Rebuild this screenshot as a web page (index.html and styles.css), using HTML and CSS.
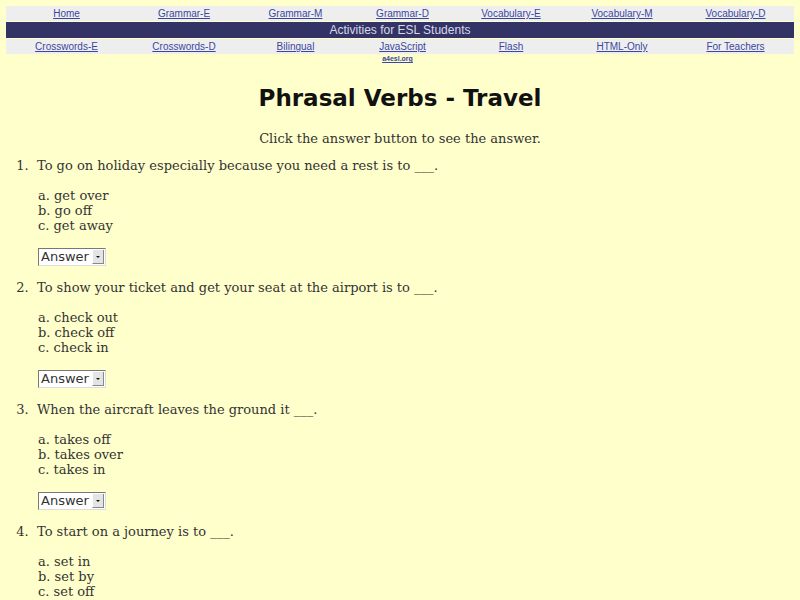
FILE: index.html
```html
<!DOCTYPE html>
<html>
<head>
<meta charset="utf-8">
<title>Phrasal Verbs - Travel</title>
<link rel="stylesheet" href="styles.css">
</head>
<body>
<div class="page">
  <nav class="nav">
    <div class="nav-row">
      <a href="#">Home</a>
      <a href="#">Grammar-E</a>
      <a href="#">Grammar-M</a>
      <a href="#">Grammar-D</a>
      <a href="#">Vocabulary-E</a>
      <a href="#">Vocabulary-M</a>
      <a href="#">Vocabulary-D</a>
    </div>
    <div class="nav-title">Activities for ESL Students</div>
    <div class="nav-row">
      <a href="#">Crosswords-E</a>
      <a href="#">Crosswords-D</a>
      <a href="#">Bilingual</a>
      <a href="#">JavaScript</a>
      <a href="#">Flash</a>
      <a href="#">HTML-Only</a>
      <a href="#">For Teachers</a>
    </div>
    <div class="site"><a href="#">a4esl.org</a></div>
  </nav>

  <h1 class="title">Phrasal Verbs - Travel</h1>
  <p class="intro">Click the answer button to see the answer.</p>

  <ol class="quiz">
    <li>
      <div class="q">To go on holiday especially because you need a rest is to ___.</div>
      <div class="opts">a. get over<br>b. go off<br>c. get away</div>
      <div class="sel"><span class="sel-text">Answer</span><span class="sel-btn"><span class="tri"></span></span></div>
    </li>
    <li>
      <div class="q">To show your ticket and get your seat at the airport is to ___.</div>
      <div class="opts">a. check out<br>b. check off<br>c. check in</div>
      <div class="sel"><span class="sel-text">Answer</span><span class="sel-btn"><span class="tri"></span></span></div>
    </li>
    <li>
      <div class="q">When the aircraft leaves the ground it ___.</div>
      <div class="opts">a. takes off<br>b. takes over<br>c. takes in</div>
      <div class="sel"><span class="sel-text">Answer</span><span class="sel-btn"><span class="tri"></span></span></div>
    </li>
    <li>
      <div class="q">To start on a journey is to ___.</div>
      <div class="opts">a. set in<br>b. set by<br>c. set off</div>
      <div class="sel"><span class="sel-text">Answer</span><span class="sel-btn"><span class="tri"></span></span></div>
    </li>
  </ol>
</div>
</body>
</html>
```

FILE: styles.css
```css
html, body {
  margin: 0;
  padding: 0;
  background: #ffffcc;
}
.page {
  padding: 6px 6px 0 6px;
  font-family: "DejaVu Serif", serif;
  color: #333;
}
.nav {
  display: flex;
  flex-direction: column;
  font-family: "Liberation Sans", Arial, sans-serif;
}
.nav-row {
  display: grid;
  grid-template-columns: 121px 114px 109px 105px 112px 110px 117px;
  background: #eeeeee;
  height: 15px;
  align-items: center;
  font-size: 10px;
}
.nav-row a {
  text-align: center;
  color: #3a47a0;
  text-decoration: underline;
}
.nav-title {
  background: #333366;
  color: #d8d8e8;
  height: 16px;
  margin: 1px 0;
  font-size: 12px;
  line-height: 16px;
  text-align: center;
}
.site {
  display: grid;
  grid-template-columns: 121px 114px 109px 105px 112px 110px 117px;
  font-size: 7px;
  font-weight: bold;
  height: 10px;
  line-height: 10px;
}
.site a {
  grid-column: 4;
  text-align: center;
  color: #3a47a0;
  margin-left: -10px;
}
.title {
  font-family: "DejaVu Sans", sans-serif;
  font-weight: bold;
  font-size: 23px;
  text-align: center;
  color: #111;
  margin: 19px 0 0 0;
  line-height: 30px;
}
.intro {
  text-align: center;
  font-size: 13px;
  margin: 18px 0 0 0;
  line-height: 16px;
}
.quiz {
  margin: 11px 0 0 0;
  padding-left: 31px;
  font-size: 13px;
  line-height: 15px;
}
.quiz li {
  margin-bottom: 14px;
  padding-left: 0;
}
.quiz li::marker {
  content: counter(list-item) ".\00a0\00a0";
}
.opts {
  margin-top: 15px;
  padding-left: 1px;
}
.sel {
  display: inline-flex;
  align-items: center;
  margin-top: 15px;
  margin-left: 1px;
  width: 66px;
  height: 16px;
  border: 1px solid;
  border-color: #777 #ddd #ddd #777;
  background: #fff;
  font-family: "DejaVu Sans", sans-serif;
  font-size: 13px;
  color: #333;
}
.sel-text {
  flex: 1;
  padding-left: 2px;
  line-height: 16px;
}
.sel-btn {
  width: 10px;
  height: 13px;
  margin-right: 1px;
  background: #e4e4e4;
  border-left: 1px solid #fff;
  border-bottom: 1px solid #888;
  border-right: 1px solid #888;
  display: flex;
  align-items: center;
  justify-content: center;
}
.tri {
  width: 0;
  height: 0;
  border-left: 2px solid transparent;
  border-right: 2px solid transparent;
  border-top: 2px solid #111;
}
```
